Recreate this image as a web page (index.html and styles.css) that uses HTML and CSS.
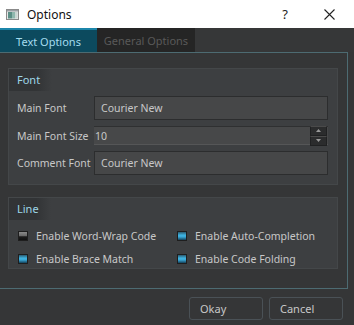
FILE: index.html
```html
<!DOCTYPE html>
<html>
<head>
<meta charset="utf-8">
<link rel="stylesheet" href="styles.css">
</head>
<body>
<div class="window">
  <div class="titlebar">
    <svg class="appicon" width="13" height="11" viewBox="0 0 13 11">
      <rect x="0.5" y="0.5" width="12" height="10" fill="#e8e8e8" stroke="#8a8a8a"/>
      <rect x="1" y="1" width="11" height="1.5" fill="#9aa0a4"/>
      <rect x="2" y="3" width="4" height="6.5" fill="#5b8f86"/>
      <rect x="6" y="3" width="3" height="6.5" fill="#8fb8ae"/>
      <rect x="9" y="3" width="2.5" height="6.5" fill="#c9d6d2"/>
    </svg>
    <span class="title">Options</span>
    <span class="help">?</span>
    <svg class="close" width="11" height="11" viewBox="0 0 11 11">
      <path d="M0.5 0.5 L10.5 10.5 M10.5 0.5 L0.5 10.5" stroke="#222" stroke-width="1.1" fill="none"/>
    </svg>
  </div>
  <div class="tabbar">
    <div class="tab active">Text Options</div>
    <div class="tab">General Options</div>
  </div>
  <div class="pane">
    <div class="group font-group">
      <div class="group-head"><span class="group-title">Font</span></div>
      <div class="group-body form">
        <div class="row">
          <span class="label">Main Font</span>
          <div class="input">Courier New</div>
        </div>
        <div class="row spin-row">
          <span class="label">Main Font Size</span>
          <div class="spin">
            <span class="spin-value">10</span>
            <div class="spin-btns">
              <div class="spin-btn"><svg width="5" height="3" viewBox="0 0 5 3"><path d="M0 3 L2.5 0 L5 3Z" fill="#9a9a9a"/></svg></div>
              <div class="spin-btn"><svg width="5" height="3" viewBox="0 0 5 3"><path d="M0 0 L2.5 3 L5 0Z" fill="#9a9a9a"/></svg></div>
            </div>
          </div>
        </div>
        <div class="row">
          <span class="label">Comment Font</span>
          <div class="input">Courier New</div>
        </div>
      </div>
    </div>
    <div class="group line-group">
      <div class="group-head"><span class="group-title">Line</span></div>
      <div class="group-body checks">
        <label class="check"><span class="box"></span>Enable Word-Wrap Code</label>
        <label class="check"><span class="box on"></span>Enable Auto-Completion</label>
        <label class="check"><span class="box on"></span>Enable Brace Match</label>
        <label class="check"><span class="box on"></span>Enable Code Folding</label>
      </div>
    </div>
  </div>
  <div class="footer">
    <button class="btn">Okay</button>
    <button class="btn">Cancel</button>
  </div>
</div>
</body>
</html>
```
FILE: styles.css
```css
html, body {
  margin: 0;
  padding: 0;
  background: #353637;
}
.window {
  width: 354px;
  height: 325px;
  overflow: hidden;
  font-family: "Noto Sans", "Open Sans", sans-serif;
  font-size: 10.5px;
  color: #c8c8c8;
  background: #353637;
}
.titlebar {
  height: 28px;
  background: #ffffff;
  display: flex;
  align-items: center;
  padding-left: 6px;
  box-sizing: border-box;
}
.title {
  margin-left: 8px;
  font-size: 12px;
  color: #111;
}
.help {
  margin-left: auto;
  font-size: 13px;
  color: #222;
  margin-right: 36px;
}
.close { margin-right: 19px; }
.tabbar {
  height: 24px;
  display: flex;
  background: #363738;
}
.tab {
  width: 98px;
  display: flex;
  align-items: center;
  justify-content: center;
  background: #252525;
  color: #595959;
  box-sizing: border-box;
  font-size: 11px;
}
.tab.active {
  width: 97px;
  background: #0c4a5e;
  color: #a4dcee;
  border-top: 2px solid #1c86aa;
}
.pane {
  width: 348px;
  height: 237px;
  box-sizing: border-box;
  border-top: 1px solid #4d6b72;
  border-right: 1px solid #4d6b72;
  border-bottom: 1px solid #4d6b72;
  padding: 15px 0 0 8px;
  display: flex;
  flex-direction: column;
  gap: 12px;
}
.group {
  width: 330px;
  background: #3d3f41;
  border: 1px solid #444749;
  box-sizing: border-box;
  display: flex;
  flex-direction: column;
}
.group-head {
  height: 22px;
  display: flex;
  align-items: center;
}
.group-title {
  height: 22px;
  line-height: 21px;
  padding: 0 12px 0 8px;
  background: linear-gradient(to right, #323436 65%, #3d3f41);
  color: #9ed6e8;
  font-size: 11px;
}
.form {
  padding: 5px 9px 9px 8px;
  display: flex;
  flex-direction: column;
  gap: 6px;
}
.row {
  display: flex;
  align-items: center;
}
.label {
  width: 77px;
  white-space: nowrap;
}
.input {
  flex: 1;
  height: 24px;
  box-sizing: border-box;
  background: #464748;
  border: 1px solid #2c2d2e;
  padding-left: 6px;
  line-height: 22px;
}
.spin {
  flex: 1;
  height: 19px;
  box-sizing: border-box;
  background: #474849;
  border-top: 1px solid #2f3031;
  border-bottom: 1px solid #555657;
  display: flex;
  align-items: center;
  padding-left: 1px;
}
.spin-value { flex: 1; }
.spin-btns {
  display: flex;
  flex-direction: column;
  margin-right: 1px;
}
.spin-btn {
  width: 15px;
  height: 8px;
  background: #2b2c2d;
  border: 1px solid #202122;
  border-top-color: #4a4a4a;
  display: flex;
  align-items: center;
  justify-content: center;
}
.checks {
  padding: 7px 8px 0 9px;
  display: grid;
  grid-template-columns: 159px 1fr;
  row-gap: 5px;
}
.check {
  display: flex;
  align-items: center;
  height: 18px;
  white-space: nowrap;
}
.box {
  width: 10px;
  height: 10px;
  box-sizing: border-box;
  border: 1px solid #1e1e1e;
  margin-right: 8px;
  background: linear-gradient(to bottom, #8a8a8a 0%, #6a6a6a 45%, #1c1c1c 60%, #111 100%);
}
.box.on {
  background: linear-gradient(to bottom, #2a5a70 0%, #3fb3e0 40%, #3aa9d8 60%, #144058 100%);
}
.footer {
  display: flex;
  justify-content: flex-end;
  gap: 6px;
  padding: 8px 11px 0 0;
}
.btn {
  width: 74px;
  height: 23px;
  font-family: inherit;
  font-size: 11px;
  color: #c8c8c8;
  background: #353637;
  border: 1px solid #4a5156;
  border-radius: 3px;
  text-align: left;
  padding-left: 10px;
}
```
